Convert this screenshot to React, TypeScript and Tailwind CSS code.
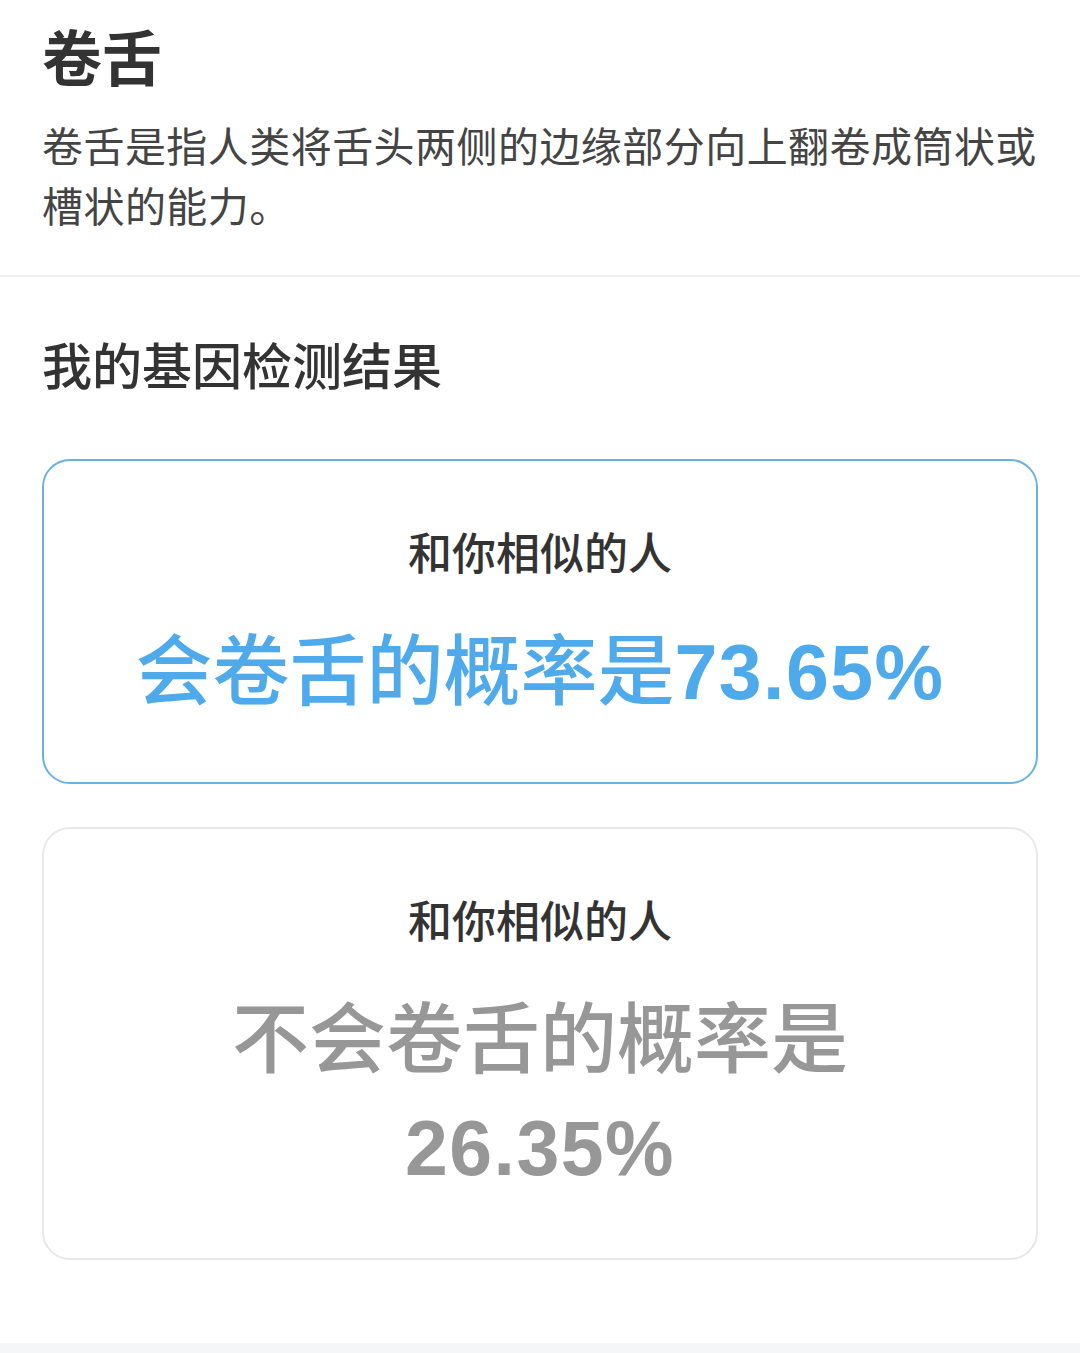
const font = { fontFamily: '"Liberation Sans", "Noto Sans CJK SC", sans-serif' };

function ResultCard({
  highlight,
  label,
  text,
  value,
}: {
  highlight: boolean;
  label: string;
  text: string;
  value: string;
}) {
  return (
    <div
      className={`rounded-[28px] border-2 bg-white px-[70px] pt-[64px] pb-[56px] text-center ${
        highlight ? "border-[#6ab2df]" : "border-[#e8e8e8]"
      }`}
    >
      <div className="text-[44px] font-medium leading-[60px] text-[#333333]">
        {label}
      </div>
      <div
        className={`mt-[33px] text-[77px] font-medium leading-[108px] ${
          highlight ? "text-[#4eaaea]" : "text-[#979797]"
        }`}
      >
        {text}
        <span className="font-bold tracking-[1.5px]">{value}</span>
      </div>
    </div>
  );
}

export default function App() {
  return (
    <div className="flex min-h-[1353px] flex-col bg-white" style={font}>
      <div className="px-[42px] pt-[21px] pb-[37px]">
        <h1 className="text-[60px] font-bold leading-[80px] text-[#333333]">
          卷舌
        </h1>
        <p className="mt-[17px] text-[41px] leading-[60px] tracking-[0.45px] text-[#444444]">
          卷舌是指人类将舌头两侧的边缘部分向上翻卷成筒状或槽状的能力。
        </p>
      </div>

      <div className="h-[2px] bg-[#f0f0f0]" />

      <div className="px-[42px] pt-[61px] pb-[83px]">
        <h2 className="text-[50px] font-medium leading-[60px] text-[#333333]">
          我的基因检测结果
        </h2>
        <div className="mt-[61px] flex flex-col gap-[43px]">
          <ResultCard
            highlight
            label="和你相似的人"
            text="会卷舌的概率是"
            value="73.65%"
          />
          <ResultCard
            highlight={false}
            label="和你相似的人"
            text="不会卷舌的概率是"
            value="26.35%"
          />
        </div>
      </div>

      <div className="flex-1 bg-[#f5f6f8]" />
    </div>
  );
}
